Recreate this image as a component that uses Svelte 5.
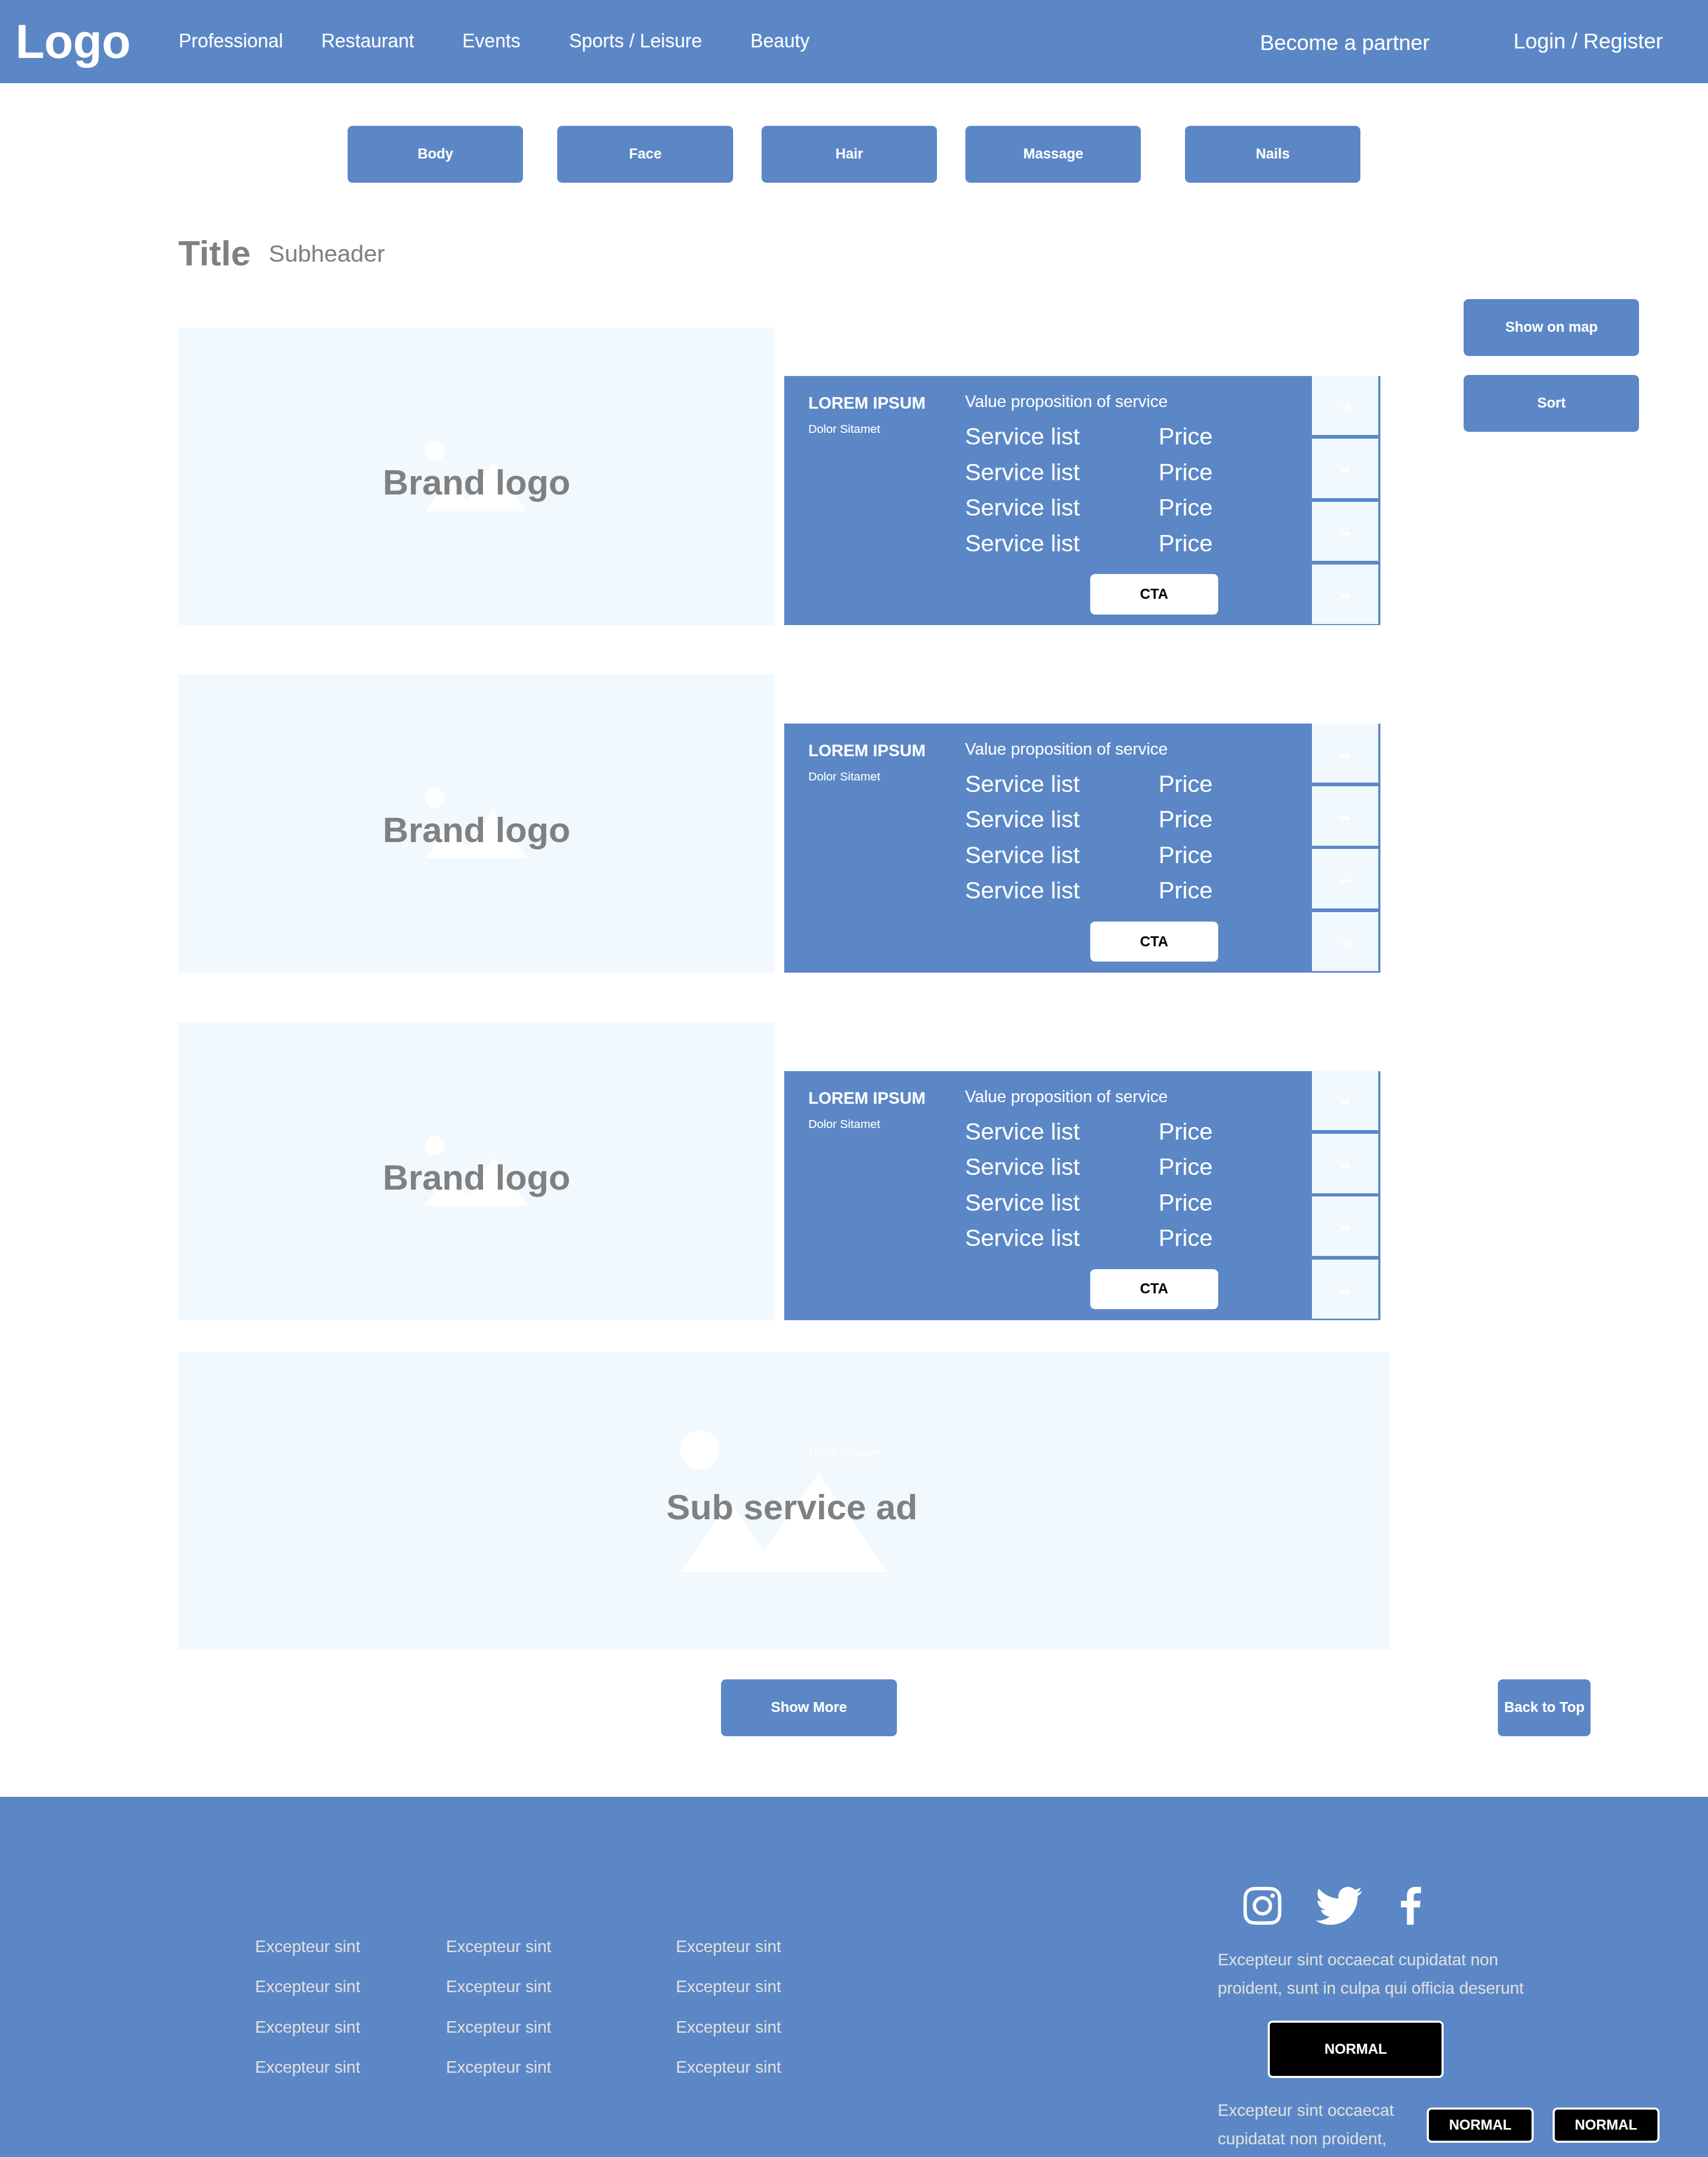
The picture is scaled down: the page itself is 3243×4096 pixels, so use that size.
<script>
  const nav = ['Professional', 'Restaurant', 'Events', 'Sports / Leisure', 'Beauty'];
  const categories = ['Body', 'Face', 'Hair', 'Massage', 'Nails'];
  const listings = [1, 2, 3];
  const four = [1, 2, 3, 4];
  const columns = [1, 2, 3];
</script>

{#snippet picture()}
  <svg class="picture" viewBox="0 0 526 360" aria-hidden="true">
    <circle cx="50" cy="50" r="50" />
    <polygon points="0,360 126,180 213.7,305 350.4,109 526,360" />
  </svg>
{/snippet}

<div class="page">
  <header class="topbar">
    <span class="logo">Logo</span>
    {#each nav as item}
      <span class="nav-item">{item}</span>
    {/each}
    <span class="partner">Become a partner</span>
    <span class="login">Login / Re<span class="caret-host">g<i class="caret"></i></span>ister</span>
  </header>

  <div class="categories">
    {#each categories as label}
      <button class="btn">{label}</button>
    {/each}
  </div>

  <div class="heading">
    <h1>Title</h1>
    <span class="subheader">Subheader</span>
  </div>

  <div class="content">
    <main>
      {#each listings as _}
        <article class="listing">
          <div class="brand">
            {@render picture()}
            <span class="overlay">Brand logo</span>
          </div>
          <div class="panel">
            <div class="who">
              <strong>LOREM IPSUM</strong>
              <small>Dolor Sitamet</small>
            </div>
            <div class="offer">
              <p>Value proposition of service</p>
              {#each four as _}
                <div class="service"><span>Service list</span><span>Price</span></div>
              {/each}
              <button class="cta">CTA</button>
            </div>
            <div class="thumbs">
              {#each four as _}
                <div class="thumb">{@render picture()}</div>
              {/each}
            </div>
          </div>
        </article>
      {/each}

      <div class="ad">
        {@render picture()}
        <small class="ad-label">Dolor Sitamet</small>
        <span class="overlay">Sub service ad</span>
      </div>
    </main>
    <aside>
      <button class="btn">Show on map</button>
      <button class="btn">Sort</button>
    </aside>
  </div>

  <div class="actions">
    <button class="btn">Show More</button>
    <button class="btn narrow">Back to Top</button>
  </div>

  <footer>
    <div class="links">
      {#each columns as _}
        <ul>
          {#each four as _}
            <li>Excepteur sint</li>
          {/each}
        </ul>
      {/each}
    </div>
    <div class="contact">
      <div class="social">
        <svg class="instagram" viewBox="0 0 24 24" aria-label="Instagram">
          <path d="M12 0C8.74 0 8.333.015 7.053.072 5.775.132 4.905.333 4.14.63c-.789.306-1.459.717-2.126 1.384S.935 3.35.63 4.14C.333 4.905.131 5.775.072 7.053.012 8.333 0 8.74 0 12s.015 3.667.072 4.947c.06 1.277.261 2.148.558 2.913.306.788.717 1.459 1.384 2.126.667.666 1.336 1.079 2.126 1.384.766.296 1.636.499 2.913.558C8.333 23.988 8.74 24 12 24s3.667-.015 4.947-.072c1.277-.06 2.148-.262 2.913-.558.788-.306 1.459-.718 2.126-1.384.666-.667 1.079-1.335 1.384-2.126.296-.765.499-1.636.558-2.913.06-1.28.072-1.687.072-4.947s-.015-3.667-.072-4.947c-.06-1.277-.262-2.149-.558-2.913-.306-.789-.718-1.459-1.384-2.126C21.319 1.347 20.651.935 19.86.63c-.765-.297-1.636-.499-2.913-.558C15.667.012 15.26 0 12 0zm0 2.16c3.203 0 3.585.016 4.85.071 1.17.055 1.805.249 2.227.415.562.217.96.477 1.382.896.419.42.679.819.896 1.381.164.422.36 1.057.413 2.227.057 1.266.07 1.646.07 4.85s-.015 3.585-.074 4.85c-.061 1.17-.256 1.805-.421 2.227-.224.562-.479.96-.899 1.382-.419.419-.824.679-1.38.896-.42.164-1.065.36-2.235.413-1.274.057-1.649.07-4.859.07-3.211 0-3.586-.015-4.859-.074-1.171-.061-1.816-.256-2.236-.421-.569-.224-.96-.479-1.379-.899-.421-.419-.69-.824-.9-1.38-.165-.42-.359-1.065-.42-2.235-.045-1.26-.061-1.649-.061-4.844 0-3.196.016-3.586.061-4.861.061-1.17.255-1.814.42-2.234.21-.57.479-.96.9-1.381.419-.419.81-.689 1.379-.898.42-.166 1.051-.361 2.221-.421 1.275-.045 1.65-.06 4.859-.06l.045.03zm0 3.678c-3.405 0-6.162 2.76-6.162 6.162 0 3.405 2.76 6.162 6.162 6.162 3.405 0 6.162-2.76 6.162-6.162 0-3.405-2.76-6.162-6.162-6.162zM12 16c-2.21 0-4-1.79-4-4s1.79-4 4-4 4 1.79 4 4-1.79 4-4 4zm7.846-10.405c0 .795-.646 1.44-1.44 1.44-.795 0-1.44-.646-1.44-1.44 0-.794.646-1.439 1.44-1.439.793-.001 1.44.645 1.44 1.439z" />
        </svg>
        <svg class="twitter" viewBox="0 2.25 24 19.5" aria-label="Twitter">
          <path d="M23.953 4.57a10 10 0 01-2.825.775 4.958 4.958 0 002.163-2.723c-.951.555-2.005.959-3.127 1.184a4.92 4.92 0 00-8.384 4.482C7.69 8.095 4.067 6.13 1.64 3.162a4.822 4.822 0 00-.666 2.475c0 1.71.87 3.213 2.188 4.096a4.904 4.904 0 01-2.228-.616v.06a4.923 4.923 0 003.946 4.827 4.996 4.996 0 01-2.212.085 4.936 4.936 0 004.604 3.417 9.867 9.867 0 01-6.102 2.105c-.39 0-.779-.023-1.17-.067a13.995 13.995 0 007.557 2.209c9.053 0 13.998-7.496 13.998-13.985 0-.21 0-.42-.015-.63A9.935 9.935 0 0024 4.59z" />
        </svg>
        <svg class="facebook" viewBox="0 0 17 32" aria-label="Facebook">
          <path d="M16.9.1V5.3H13.7C11.4 5.3 10.8 6.4 10.8 8.1V11.8H16.5L15.95 17.3H10.8V32H5.05V17.3H0V11.8H5.05V7.2C5.05 3 7.5 0 12.2 0Z" />
        </svg>
      </div>
      <p class="about">Excepteur sint occaecat cupidatat non<br />proident, sunt in culpa qui officia deserunt</p>
      <button class="dark wide">NORMAL</button>
      <div class="bottom">
        <p>Excepteur sint occaecat<br />cupidatat non proident,</p>
        <button class="dark">NORMAL</button>
        <button class="dark">NORMAL</button>
      </div>
    </div>
  </footer>
</div>

<style>
  /* 1rem is one unit of a 1440-unit wide layout */
  :global(html) {
    font-size: calc(100vw / 1440);
  }
  :global(body) {
    margin: 0;
    overflow: hidden;
  }
  .page {
    --blue: #5b87c6;
    --pale: #f1f8fe;
    --grey: #808080;
    width: 1440rem;
    height: 100vh;
    overflow: hidden;
    background: #fff;
    font-family: 'Liberation Sans', Arial, sans-serif;
    font-size: 14rem;
    color: #fff;
    white-space: nowrap;
  }
  p, h1, ul {
    margin: 0;
    padding: 0;
    list-style: none;
  }
  button {
    display: block;
    box-sizing: border-box;
    margin: 0;
    padding: 0;
    border: 0;
    border-radius: 4rem;
    font: bold 12rem/1 'Liberation Sans', Arial, sans-serif;
    color: #fff;
  }
  svg {
    display: block;
    fill: #fff;
  }

  .topbar {
    display: grid;
    grid-template-columns: 137.5rem 120.3rem 118.9rem 90rem 152.9rem 429.6rem 213.6rem 150rem;
    align-items: start;
    height: 70rem;
    padding-left: 13.1rem;
    background: var(--blue);
  }
  .logo {
    font-size: 40rem;
    font-weight: bold;
    letter-spacing: -0.2rem;
    line-height: 70rem;
  }
  .nav-item {
    font-size: 16rem;
    line-height: 69rem;
  }
  .partner {
    font-size: 18rem;
    line-height: 72rem;
  }
  .login {
    font-size: 18rem;
    line-height: 69.5rem;
  }
  .caret-host {
    position: relative;
    z-index: 0;
  }
  .caret {
    position: absolute;
    z-index: -1;
    right: -0.8rem;
    top: 3.2rem;
    width: 1.2rem;
    height: 15rem;
    background: #1e9bff;
  }

  .btn {
    width: 148rem;
    height: 48rem;
    background: var(--blue);
  }
  .narrow {
    width: 78rem;
  }

  .categories {
    display: grid;
    grid-template-columns: 177rem 172rem 172rem 185rem 148rem;
    padding: 36rem 0 0 293rem;
  }

  .heading {
    display: flex;
    align-items: flex-start;
    gap: 15.2rem;
    box-sizing: border-box;
    height: 98rem;
    padding: 41.6rem 0 0 150.3rem;
    color: var(--grey);
  }
  h1 {
    font-size: 30rem;
    line-height: 36rem;
  }
  .subheader {
    font-size: 20rem;
    line-height: 37rem;
  }

  .content {
    display: grid;
    grid-template-columns: 1022rem 148rem;
    column-gap: 62rem;
    padding-left: 150rem;
  }
  main {
    padding-top: 24rem;
  }
  aside {
    display: flex;
    flex-direction: column;
    gap: 16rem;
  }

  .listing {
    display: flex;
    align-items: flex-end;
    gap: 8rem;
    margin-bottom: 42rem;
  }
  .listing:nth-child(3) {
    margin-bottom: 27rem;
  }
  .brand,
  .ad {
    position: relative;
    display: flex;
    align-items: center;
    justify-content: center;
    height: 251rem;
    background: var(--pale);
  }
  .brand {
    width: 503rem;
  }
  .brand .picture {
    width: 86.4rem;
  }
  .ad .picture {
    width: 175.3rem;
  }
  .overlay {
    position: absolute;
    left: 0.6rem;
    right: 0;
    top: 112.6rem;
    font-size: 30rem;
    font-weight: bold;
    line-height: 36rem;
    text-align: center;
    color: var(--grey);
  }
  .ad .overlay {
    left: 13.4rem;
  }
  .ad-label {
    position: absolute;
    left: 531.6rem;
    top: 79.5rem;
    font-size: 10rem;
    line-height: 12rem;
  }

  .panel {
    display: grid;
    grid-template-columns: 132.1rem 292.4rem 56rem;
    box-sizing: border-box;
    width: 503rem;
    height: 210rem;
    padding-left: 20.5rem;
    background: var(--blue);
  }
  .who {
    display: flex;
    flex-direction: column;
    padding-top: 13.1rem;
  }
  .who strong {
    font-size: 14rem;
    line-height: 20rem;
  }
  .who small {
    margin-top: 5.7rem;
    font-size: 10rem;
    line-height: 12rem;
  }
  .offer p {
    padding-top: 11.8rem;
    line-height: 20rem;
  }
  .service {
    display: grid;
    grid-template-columns: 163.2rem auto;
    font-size: 20rem;
    line-height: 30rem;
  }
  .offer p + .service {
    margin-top: 4.2rem;
  }
  .cta {
    width: 108rem;
    height: 34rem;
    margin: 11rem 0 0 105.4rem;
    background: #fff;
    color: #000;
  }
  .thumbs {
    display: flex;
    flex-direction: column;
    gap: 3rem;
  }
  .thumb {
    display: flex;
    align-items: center;
    justify-content: center;
    height: 50rem;
    background: var(--pale);
  }
  .thumb .picture {
    width: 9.5rem;
  }

  .actions {
    display: flex;
    box-sizing: border-box;
    gap: 507rem;
    height: 124rem;
    padding: 25rem 0 0 608rem;
  }

  footer {
    display: grid;
    grid-template-columns: 811.6rem auto;
    height: 304rem;
    padding-left: 215rem;
    background: var(--blue);
    color: #e0e0e0;
  }
  .links {
    display: grid;
    grid-template-columns: 161rem 193.8rem auto;
    align-content: start;
    padding-top: 109.2rem;
    line-height: 34rem;
  }
  .social {
    display: flex;
    padding: 76rem 0 0 21.8rem;
  }
  .social svg {
    height: 32rem;
  }
  .instagram {
    width: 32rem;
  }
  .twitter {
    width: 39.4rem;
    margin: 0 32.4rem 0 29rem;
  }
  .facebook {
    width: 17rem;
  }
  .contact p {
    line-height: 24rem;
  }
  .about {
    padding-top: 17.2rem;
  }
  .dark {
    width: 90rem;
    height: 30rem;
    border: 2rem solid #fff;
    background: #000;
  }
  .wide {
    width: 148rem;
    height: 48rem;
    margin: 15.8rem 0 0 42.4rem;
  }
  .bottom {
    display: grid;
    grid-template-columns: 176.4rem 106rem 90rem;
    align-items: start;
    padding-top: 15.2rem;
  }
  .bottom .dark {
    margin-top: 9.8rem;
  }
</style>
